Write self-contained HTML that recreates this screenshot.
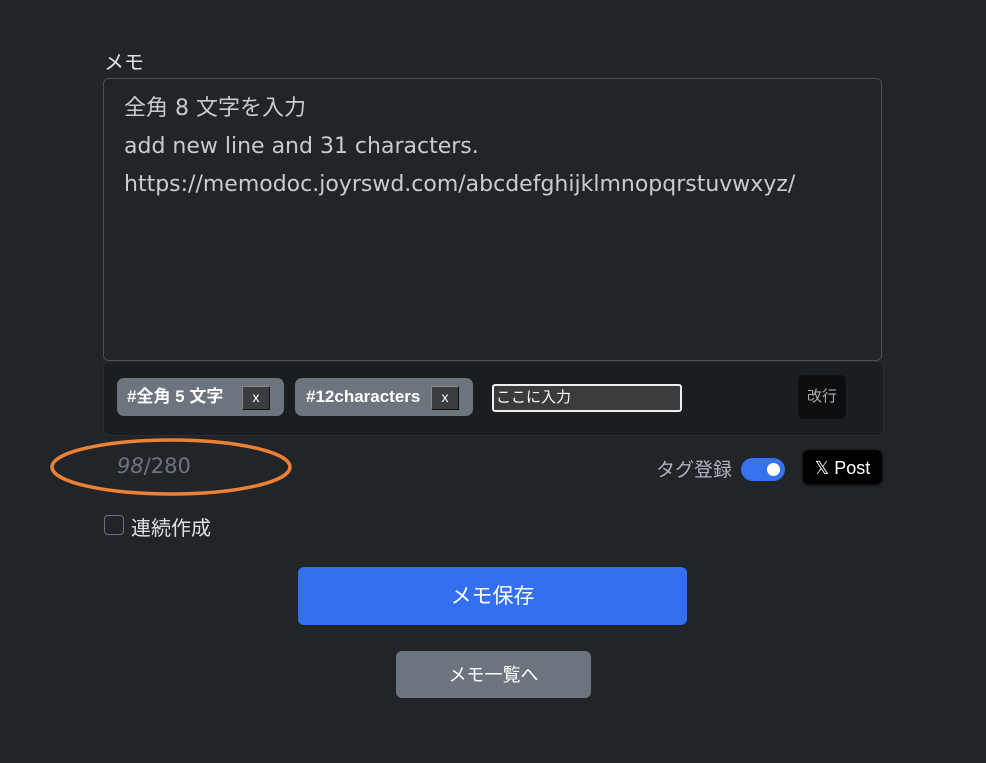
<!DOCTYPE html>
<html><head><meta charset="utf-8"><style>
body{margin:0;width:986px;height:763px;background:#212529;font-family:"Liberation Sans","Noto Sans CJK JP",sans-serif;color:#dee2e6;position:relative;overflow:hidden}
.abs{position:absolute}
.ta{left:103px;top:78px;width:777px;height:281px;border:1px solid #495057;border-radius:6px;background:#212529}
.ta div{position:absolute;left:20px;font-size:22px;color:#c8ccd0;font-family:"DejaVu Sans","Noto Sans CJK JP",sans-serif;white-space:nowrap}
.tags{left:103px;top:361px;width:779px;height:73px;background:#1b1e21;border-radius:6px;border:1px solid #2b2f33}
.tag{top:378px;height:38px;background:#6c757d;border-radius:7px;color:#fff;font-weight:bold;font-size:17px;line-height:38px}
.x{position:absolute;top:8px;width:26px;height:22px;background:#3a3d40;border:1px solid #888;border-right-color:#111;border-bottom-color:#111;line-height:20px;text-align:center;font-weight:normal;font-size:14px;color:#fff}
.btn{border-radius:6px;color:#fff;text-align:center}
</style></head><body>
<div class="abs" style="left:104px;top:46px;font-size:20px;color:#dee2e6">メモ</div>
<div class="abs ta">
<div style="top:11px">全角 8 文字を入力</div>
<div style="top:55px">add new line and 31 characters.</div>
<div style="top:93px">https://memodoc.joyrswd.com/abcdefghijklmnopqrstuvwxyz/</div>
</div>
<div class="abs tags"></div>
<div class="abs tag" style="left:117px;width:167px"><span style="margin-left:10px">#全角 5 文字</span><span class="x" style="left:125px">x</span></div>
<div class="abs tag" style="left:295px;width:178px"><span style="margin-left:11px">#12characters</span><span class="x" style="left:136px">x</span></div>
<div class="abs" style="left:492px;top:384px;width:184px;height:24px;border:2px solid #eee;border-radius:3px;background:#3b3b3b;font-size:15px;line-height:24px;color:#fff;padding-left:2px;box-sizing:content-box">ここに入力</div>
<div class="abs" style="left:798px;top:375px;width:48px;height:44px;background:#0d0e0f;border-radius:5px;color:#aaa;font-size:15px;line-height:44px;text-align:center">改行</div>
<div class="abs" style="left:117px;top:454px;font-size:21px;color:#6c757d;font-family:'DejaVu Sans',sans-serif"><i>98</i>/280</div>
<svg class="abs" style="left:50px;top:436px" width="246" height="62"><ellipse cx="121" cy="31" rx="119" ry="27" fill="none" stroke="#ec8035" stroke-width="3.5"/></svg>
<div class="abs" style="left:656px;top:455px;font-size:19px;color:#adb5bd">タグ登録</div>
<div class="abs" style="left:741px;top:458px;width:44px;height:23px;background:#3572ef;border-radius:12px"><div style="position:absolute;right:5px;top:5px;width:13px;height:13px;background:#fff;border-radius:50%"></div></div>
<div class="abs btn" style="left:803px;top:450px;width:79px;height:34px;background:#000;font-size:18px;line-height:36px;box-shadow:0 1px 3px #000">𝕏 Post</div>
<div class="abs" style="left:104px;top:515px;width:18px;height:18px;border:1px solid #6c757d;border-radius:4px"></div>
<div class="abs" style="left:131px;top:512px;font-size:20px;color:#dee2e6">連続作成</div>
<div class="abs btn" style="left:298px;top:567px;width:389px;height:58px;background:#336ff1;font-size:21px;line-height:60px">メモ保存</div>
<div class="abs btn" style="left:396px;top:651px;width:195px;height:47px;background:#6c757d;font-size:18px;line-height:49px">メモ一覧へ</div>
</body></html>
